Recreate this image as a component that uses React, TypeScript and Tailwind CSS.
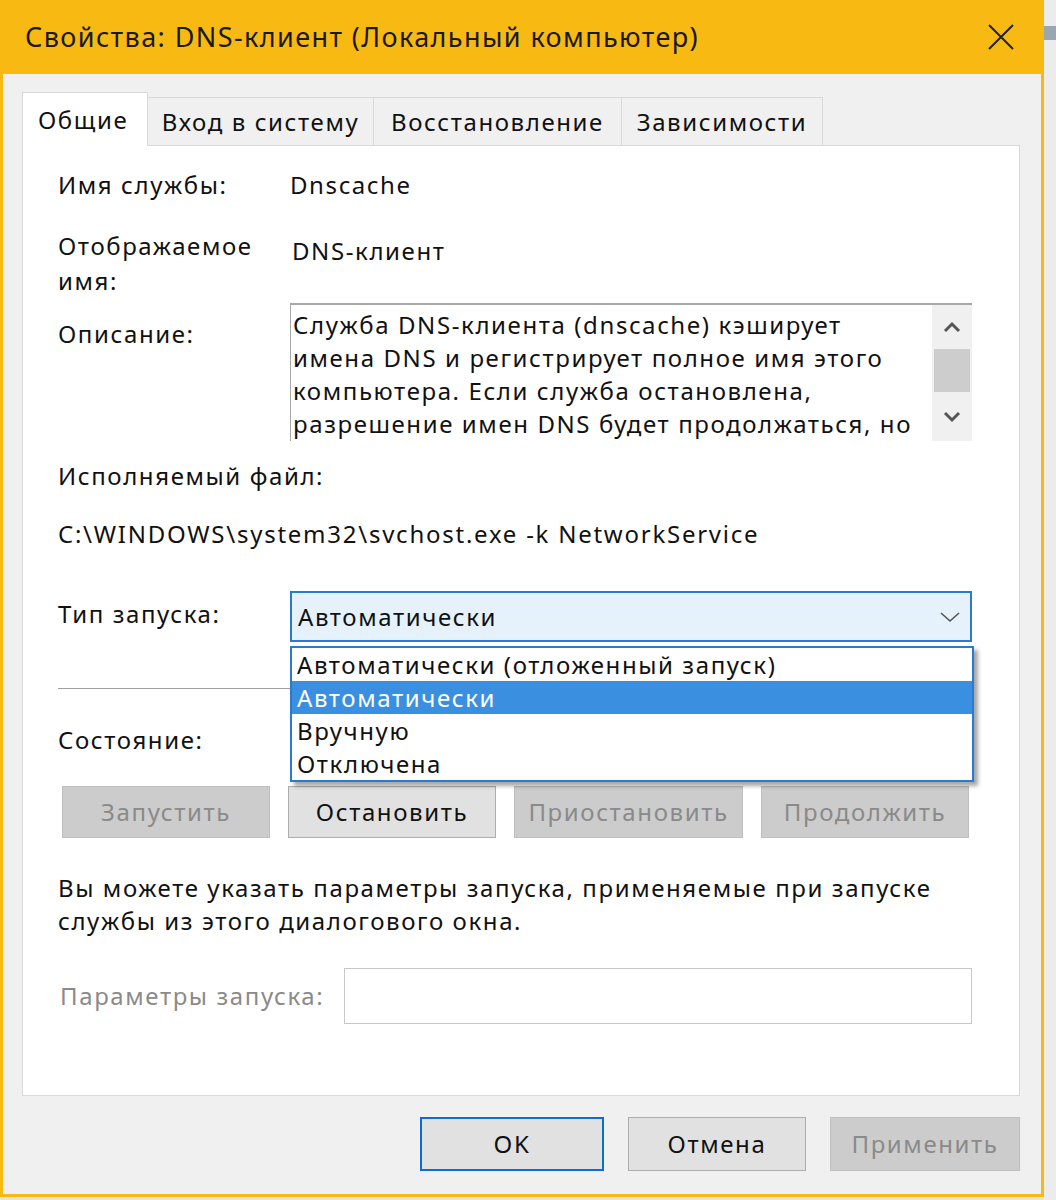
const font = "font-['Noto_Sans',sans-serif]";

const Chevron = ({ up = false, className = "" }: { up?: boolean; className?: string }) => (
  <svg width="18" height="12" viewBox="0 0 18 12" className={className}>
    <path
      d={up ? "M2 10 L9 3 L16 10" : "M2 2 L9 9 L16 2"}
      fill="none"
      stroke="currentColor"
      strokeWidth="3"
    />
  </svg>
);

const Button = ({ label, disabled = false, w }: { label: string; disabled?: boolean; w: string }) => (
  <div
    className={`${w} h-[52px] flex items-center justify-center border ${
      disabled ? "bg-[#cccccc] border-[#bfbfbf] text-[#8a8a8a]" : "bg-[#e1e1e1] border-[#adadad] text-[#111]"
    }`}
  >
    {label}
  </div>
);

const App = () => {
  const tabs = ["Вход в систему", "Восстановление", "Зависимости"];
  const tabW = ["w-[226px]", "w-[248px]", "w-[201px]"];
  const options = ["Автоматически (отложенный запуск)", "Автоматически", "Вручную", "Отключена"];

  return (
    <div className={`w-[1056px] h-[1200px] flex bg-[#e4e4e4] text-[24px] leading-[34px] tracking-[1.6px] text-[#111] ${font}`}>
      <div className="w-[1044px] h-[1197px] flex flex-col border-x-[3px] border-b-[3px] border-[#f7b912] bg-[#f0f0f0]">
        {/* title bar */}
        <div className="h-[74px] shrink-0 bg-[#f7b912] flex items-center justify-between pl-[22px] pr-[26px]">
          <span className="text-[27px] text-[#1a1a1a] tracking-[1.4px]">Свойства: DNS-клиент (Локальный компьютер)</span>
          <svg width="28" height="28" viewBox="0 0 28 28" className="text-[#222]">
            <path d="M2 2 L26 26 M26 2 L2 26" stroke="currentColor" strokeWidth="2" />
          </svg>
        </div>

        {/* tabs */}
        <div className="pt-[18px] pl-[19px] pr-[21px] flex flex-col">
          <div className="flex items-end h-[53px] relative z-10">
            <div className="w-[126px] h-[54px] bg-white border border-b-0 border-[#d9d9d9] flex items-center pl-[15px] -mb-px">
              Общие
            </div>
            {tabs.map((t, i) => (
              <div
                key={t}
                className={`${tabW[i]} h-[48px] bg-[#f0f0f0] border border-l-0 border-b-0 border-[#d9d9d9] flex items-center justify-center`}
              >
                {t}
              </div>
            ))}
          </div>

          {/* panel */}
          <div className="h-[951px] bg-white border border-[#d9d9d9] pt-[22px] pl-[35px] pr-[47px] flex flex-col">
            <div className="flex">
              <div className="w-[232px]">Имя службы:</div>
              <div>Dnscache</div>
            </div>

            <div className="flex mt-[27px]">
              <div className="w-[234px]">
                <div>Отображаемое</div>
                <div className="mt-px">имя:</div>
              </div>
              <div className="mt-[5px]">DNS-клиент</div>
            </div>

            <div className="flex mt-[5px]">
              <div className="w-[232px] mt-[14px]">Описание:</div>
              <div className="flex-1 h-[138px] flex border-t-2 border-l border-[#a8a8a8]">
                <div className="flex-1 pl-[2px] pt-[3px] leading-[33px] overflow-hidden whitespace-nowrap">
                  <div>Служба DNS-клиента (dnscache) кэширует</div>
                  <div>имена DNS и регистрирует полное имя этого</div>
                  <div>компьютера. Если служба остановлена,</div>
                  <div>разрешение имен DNS будет продолжаться, но</div>
                </div>
                <div className="w-[40px] bg-[#f0f0f0] flex flex-col items-center text-[#555]">
                  <div className="h-[44px] flex items-center justify-center">
                    <Chevron up />
                  </div>
                  <div className="w-[36px] h-[43px] bg-[#cdcdcd]" />
                  <div className="flex-1 flex items-center justify-center">
                    <Chevron />
                  </div>
                </div>
              </div>
            </div>

            <div className="mt-[18px]">Исполняемый файл:</div>
            <div className="mt-[24px] tracking-[1.75px]">C:\WINDOWS\system32\svchost.exe -k NetworkService</div>

            <div className="flex mt-[40px]">
              <div className="w-[232px] mt-[6px]">Тип запуска:</div>
              <div className="flex-1 relative">
                <div className="h-[51px] bg-[#e5f1fb] border-2 border-[#2a7bd0] flex items-center justify-between pl-[6px] pr-[10px]">
                  <span>Автоматически</span>
                  <svg width="20" height="12" viewBox="0 0 20 12" className="text-[#555]">
                    <path d="M1 2 L10 10 L19 2" fill="none" stroke="currentColor" strokeWidth="1.6" />
                  </svg>
                </div>
                <div className="absolute left-0 top-[55px] w-[684px] bg-white border-2 border-[#2a7bd0] shadow-[4px_4px_4px_rgba(0,0,0,0.35)] z-20">
                  {options.map((o, i) => (
                    <div
                      key={o}
                      className={`h-[33px] leading-[33px] pl-[5px] ${i === 1 ? "bg-[#3a8fe0] text-white" : ""}`}
                    >
                      {o}
                    </div>
                  ))}
                </div>
              </div>
            </div>

            <div className="mt-[46px] h-px bg-[#a0a0a0]" />

            <div className="mt-[34px]">Состояние:</div>

            <div className="flex mt-[29px] ml-[4px] gap-[18px]">
              <Button label="Запустить" disabled w="w-[208px]" />
              <Button label="Остановить" w="w-[208px]" />
              <Button label="Приостановить" disabled w="w-[229px]" />
              <Button label="Продолжить" disabled w="w-[208px]" />
            </div>

            <div className="mt-[33px] leading-[33px]">
              <div>Вы можете указать параметры запуска, применяемые при запуске</div>
              <div>службы из этого диалогового окна.</div>
            </div>

            <div className="flex items-center mt-[31px]">
              <div className="w-[286px] pl-[2px] text-[#8a8a8a]">Параметры запуска:</div>
              <div className="flex-1 h-[56px] border border-[#c8c8c8] bg-white" />
            </div>
          </div>
        </div>

        {/* bottom buttons */}
        <div className="flex justify-end pr-[21px] mt-[21px] gap-[24px]">
          <div className="w-[184px] h-[54px] flex items-center justify-center bg-[#e1e1e1] border-2 border-[#0a6fd0]">
            OK
          </div>
          <div className="w-[178px] h-[54px] flex items-center justify-center bg-[#e1e1e1] border border-[#adadad]">
            Отмена
          </div>
          <div className="w-[190px] h-[54px] flex items-center justify-center bg-[#cccccc] border border-[#bfbfbf] text-[#8a8a8a]">
            Применить
          </div>
        </div>
      </div>
      <div className="flex-1 flex flex-col bg-[#ececec]">
        <div className="mt-[26px] h-[14px] bg-[#9aa6b0]" />
      </div>
    </div>
  );
};

export default App;
